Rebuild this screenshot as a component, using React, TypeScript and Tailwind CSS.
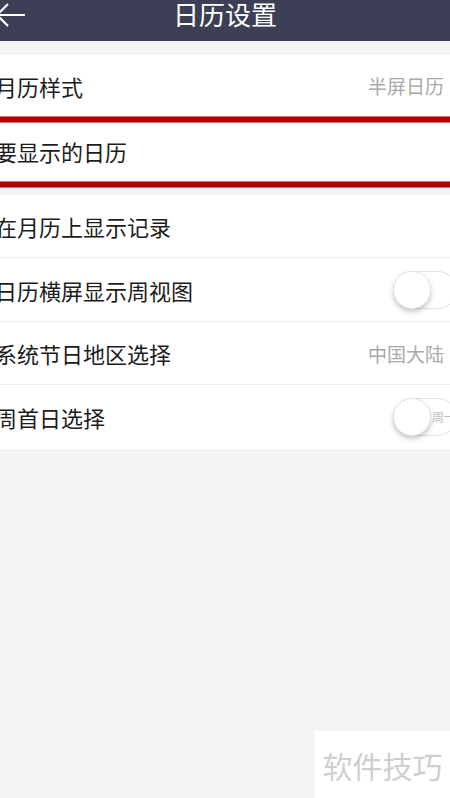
import React from 'react';

const font = { fontFamily: '"Noto Sans CJK SC", "Noto Sans", sans-serif' };

const RedRule = () => (
  <div className="h-[7px] bg-[#b10000] border-y border-[#d77070]" />
);

const Toggle = ({ label }: { label?: string }) => (
  <div className="relative -mr-[13px] h-[38px] w-[64px] shrink-0 rounded-full border border-[#e2e2e2] bg-white">
    {label && (
      <span className="absolute left-[38px] top-1/2 -translate-y-1/2 text-[12px] leading-none text-[#bdbdbd]">
        {label}
      </span>
    )}
    <div className="absolute -left-px -top-px h-[38px] w-[38px] rounded-full border border-[#e6e6e6] bg-white shadow-[0_3px_5px_rgba(0,0,0,0.22)]" />
  </div>
);

const Row = ({
  title,
  h,
  right,
}: {
  title: string;
  h: string;
  right?: React.ReactNode;
}) => (
  <div className={`flex items-center justify-between bg-white pr-[6px] ${h}`}>
    <span className="-ml-[5px] text-[22px] leading-none text-[#1c1c1c]">{title}</span>
    {right}
  </div>
);

const Value = ({ text }: { text: string }) => (
  <span className="text-[19px] leading-none text-[#a9a9a9]">{text}</span>
);

export default function App() {
  return (
    <div className="relative min-h-[798px] w-[450px] overflow-hidden bg-[#f4f4f4]" style={font}>
      <header className="relative flex h-[41px] items-start justify-center bg-[#3c3f56] pt-[1px]">
        <svg className="absolute left-0 top-0" width="30" height="30" viewBox="0 0 30 30" fill="none">
          <path d="M-3 15H25M-3 15L8 4M-3 15L8 26" stroke="#fff" strokeWidth="2.2" />
        </svg>
        <h1 className="text-[26px] leading-[26px] text-white">日历设置</h1>
      </header>

      <div className="h-[14px]" />

      <Row title="月历样式" h="h-[61px]" right={<Value text="半屏日历" />} />
      <RedRule />
      <Row title="要显示的日历" h="h-[56px]" />
      <div className="h-[2px] bg-white" />
      <RedRule />

      <div className="h-[7px]" />

      <div className="divide-y divide-[#ececec] bg-white">
        <Row title="在月历上显示记录" h="h-[63px]" />
        <Row title="日历横屏显示周视图" h="h-[64px]" right={<Toggle />} />
        <Row title="系统节日地区选择" h="h-[63px]" right={<Value text="中国大陆" />} />
        <Row title="周首日选择" h="h-[64px]" right={<Toggle label="周一" />} />
      </div>

      <div className="absolute bottom-0 right-0 flex h-[67px] w-[135px] items-center justify-center bg-white">
        <span className="text-[30px] leading-none text-[#cfcfcf]">软件技巧</span>
      </div>
    </div>
  );
}
